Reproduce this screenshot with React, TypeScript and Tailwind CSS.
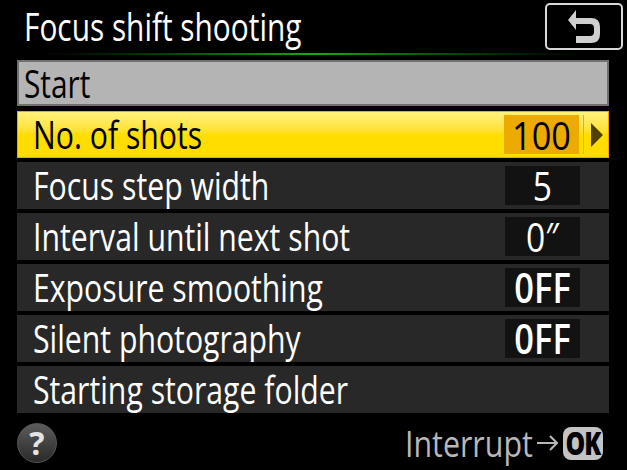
import React from 'react';

type Row = { label: string; value?: string; valueClass?: string; selected?: boolean };

const rows: Row[] = [
  { label: 'No. of shots', value: '100', valueClass: 'scale-x-[0.88] text-[39px] font-medium leading-[39px] whitespace-nowrap', selected: true },
  { label: 'Focus step width', value: '5', valueClass: 'scale-x-[0.84] text-[40px] font-medium leading-[39px] whitespace-nowrap' },
  { label: 'Interval until next shot', value: '0″', valueClass: 'scale-x-[0.84] text-[40px] font-medium leading-[39px] whitespace-nowrap' },
  { label: 'Exposure smoothing', value: '0FF', valueClass: 'scale-x-[0.84] text-[41px] font-semibold leading-[39px] whitespace-nowrap' },
  { label: 'Silent photography', value: '0FF', valueClass: 'scale-x-[0.84] text-[41px] font-semibold leading-[39px] whitespace-nowrap' },
  { label: 'Starting storage folder' },
];

const BackIcon = () => (
  <svg width="33" height="33" viewBox="0 0 33 33" fill="none">
    <path d="M8 0 L0 10 L8 20 L8 14 L22 14 Q26 14 26 18 L26 22 Q26 26 22 26 L8 26 L8 33 L23 33 Q32 33 32 24 L32 17 Q32 8 23 8 L8 8 Z" fill="#cfcfcf" />
  </svg>
);

const App: React.FC = () => {
  return (
    <div className="w-[627px] h-[470px] bg-black overflow-hidden text-white font-['Open_Sans',sans-serif]">
      <div className="h-[53px] flex items-start justify-between pl-[24px] pr-[4px]">
        <span className="origin-left scale-x-[0.785] text-[38px] font-medium leading-[52px] whitespace-nowrap">Focus shift shooting</span>
        <div className="mt-[3px] w-[78px] h-[47px] shrink-0 border-2 border-[#d8d8d8] rounded-[5px] flex items-center justify-center">
          <BackIcon />
        </div>
      </div>
      <div className="h-[2px] mx-[8px] bg-gradient-to-r from-black via-[#12b012] via-50% to-black" />
      <div className="mt-[5px] mx-[17px] w-[592px] flex flex-col">
        <div className="h-[46px] bg-[#b4b4b4] border-2 border-[#707070] text-black text-[38px] font-medium leading-[42px] pl-[5px]">
          <span className="inline-block origin-left scale-x-[0.785] whitespace-nowrap">Start</span>
        </div>
        <div className="mt-[5px] flex flex-col gap-[4px]">
          {rows.map((row) => (
            <div
              key={row.label}
              className={
                row.selected
                  ? 'h-[47px] flex items-center border border-[#f0a800] bg-gradient-to-b from-[#fff27a] via-[#ffde00] to-[#ffdc00] text-black'
                  : 'h-[47px] flex items-center bg-[#282828] text-white'
              }
            >
              <span className={row.selected ? 'ml-[15px] flex-1 origin-left scale-x-[0.795] text-[38px] font-medium leading-[47px] whitespace-nowrap' : 'ml-[16px] flex-1 origin-left scale-x-[0.795] text-[38px] font-medium leading-[47px] whitespace-nowrap'}>{row.label}</span>
              {row.value && (
                <div className={row.selected ? 'w-[75px] h-[39px] bg-[#edaa00] flex items-center justify-center' : 'w-[75px] h-[39px] bg-[#121212] flex items-center justify-center'}>
                  <span className={row.valueClass}>{row.value}</span>
                </div>
              )}
              {row.value && (
                <div className={row.selected ? 'ml-[4px] w-[25px] h-[39px] flex items-center border-l border-[#e0b400] pl-[7px]' : 'ml-[4px] w-[25px]'}>
                  {row.selected && (
                    <svg width="12" height="24" viewBox="0 0 12 24"><path d="M0 0 L12 12 L0 24 Z" fill="#4f4000" /></svg>
                  )}
                </div>
              )}
            </div>
          ))}
        </div>
      </div>
      <div className="mt-[4px] h-[52px] flex items-center justify-between pl-[17px] pr-[24px]">
        <div className="w-[40px] h-[40px] rounded-full bg-gradient-to-b from-[#5c5c5c] to-[#2a2a2a] border border-[#555] flex items-center justify-center text-[#e4e4e4] text-[32px] font-bold leading-none">?</div>
        <div className="flex items-center text-[#b8b8b8]">
          <span className="text-[37px] leading-[52px] whitespace-nowrap origin-right scale-x-[0.82]">Interrupt</span>
          <svg className="ml-[4px]" width="21" height="18" viewBox="0 0 21 18" fill="none" stroke="#b8b8b8" strokeWidth="2"><path d="M0 9H20M13 2L20 9L13 16" /></svg>
          <span className="ml-[5px] w-[40px] h-[33px] rounded-[8px] bg-[#c4c4c4] flex items-center justify-center text-black">
            <span className="scale-x-[0.8] text-[31px] font-extrabold leading-[33px] tracking-[-1px]">OK</span>
          </span>
        </div>
      </div>
    </div>
  );
};

export default App;
